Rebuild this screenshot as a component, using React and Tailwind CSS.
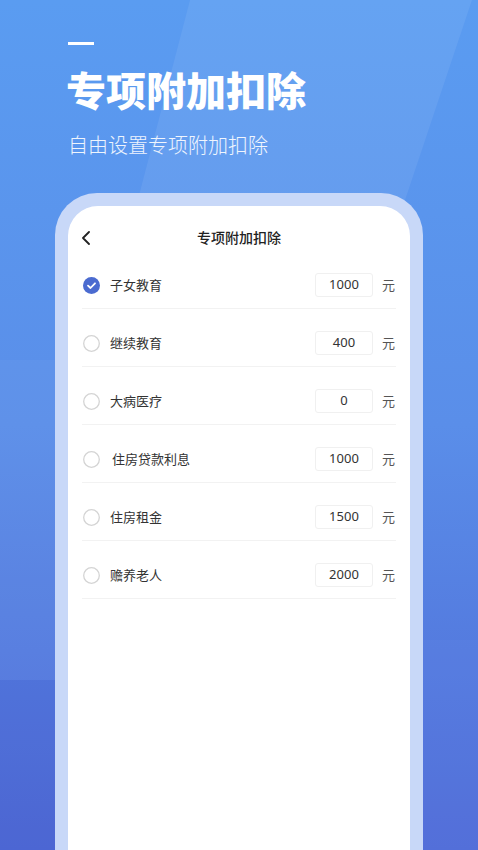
import React from "react";

const rows = [
  { label: "子女教育", value: "1000", checked: true },
  { label: "继续教育", value: "400" },
  { label: "大病医疗", value: "0" },
  { label: "住房贷款利息", value: "1000", pad: true },
  { label: "住房租金", value: "1500" },
  { label: "赡养老人", value: "2000" },
];

function Check({ checked }) {
  if (checked) {
    return (
      <svg width="17" height="17" viewBox="0 0 17 17" className="shrink-0">
        <circle cx="8.5" cy="8.5" r="8.5" fill="#4b6bd0" />
        <path d="M5 8.7 L7.5 11 L12 6.3" fill="none" stroke="#fff" strokeWidth="1.8" strokeLinecap="round" strokeLinejoin="round" />
      </svg>
    );
  }
  return (
    <svg width="17" height="17" viewBox="0 0 17 17" className="shrink-0">
      <circle cx="8.5" cy="8.5" r="7.8" fill="none" stroke="#d4d4d4" strokeWidth="1.3" />
    </svg>
  );
}

export default function App() {
  const font = { fontFamily: '"Noto Sans CJK SC", "Noto Sans", sans-serif' };
  return (
    <div className="relative w-[478px] h-[850px] overflow-hidden bg-gradient-to-b from-[#5a9cf1] via-[#5a8ee9] to-[#4f6ad6]" style={font}>
      <svg className="absolute inset-0" width="478" height="850" viewBox="0 0 478 850">
        <polygon points="190,0 472,0 395,230 130,230" fill="#ffffff" opacity="0.07" />
        <rect x="0" y="360" width="60" height="320" fill="#ffffff" opacity="0.03" />
        <rect x="0" y="680" width="60" height="170" fill="#3a48c0" opacity="0.12" />
        <rect x="420" y="640" width="58" height="210" fill="#6a90e8" opacity="0.15" />
      </svg>
      <div className="relative flex flex-col">
        <div className="ml-[68px] mt-[42px] w-[26px] h-[3px] bg-white" />
        <div className="ml-[66px] mt-[16px] text-[40px] leading-[56px] font-black text-white tracking-[0px]">专项附加扣除</div>
        <div className="ml-[68px] mt-[14px] text-[20px] leading-[28px] font-light text-white/90">自由设置专项附加扣除</div>
        <div className="ml-[55px] mt-[34px] w-[368px] h-[700px] rounded-t-[42px] bg-[#c8d8f8] pt-[13px] px-[13px]">
          <div className="h-full rounded-t-[30px] bg-white px-[14px]">
            <div className="relative h-[45px] pt-[20px]">
              <svg className="absolute left-[-1px] top-[25px]" width="10" height="14" viewBox="0 0 10 14">
                <path d="M8 1 L2 7 L8 13" fill="none" stroke="#222" strokeWidth="1.8" strokeLinecap="round" strokeLinejoin="round" />
              </svg>
              <div className="text-center text-[14px] leading-[22px] text-[#222] font-medium">专项附加扣除</div>
            </div>
            {rows.map((r) => (
              <div key={r.label} className="h-[58px] pt-[22px] border-b border-[#f2f2f2] flex items-start">
                <div className="h-[24px] flex items-center w-full">
                  <div className="ml-[1px]"><Check checked={r.checked} /></div>
                  <div className={`${r.pad ? "ml-[12px]" : "ml-[10px]"} text-[13px] text-[#333] flex-1`}>{r.label}</div>
                  <div className="w-[58px] h-[24px] border border-[#f0f0f0] rounded-[3px] flex items-center justify-center text-[13px] text-[#333]" style={{ fontFamily: '"Noto Sans", sans-serif' }}>{r.value}</div>
                  <div className="ml-[9px] mr-[1px] text-[13px] text-[#555]">元</div>
                </div>
              </div>
            ))}
          </div>
        </div>
      </div>
    </div>
  );
}
